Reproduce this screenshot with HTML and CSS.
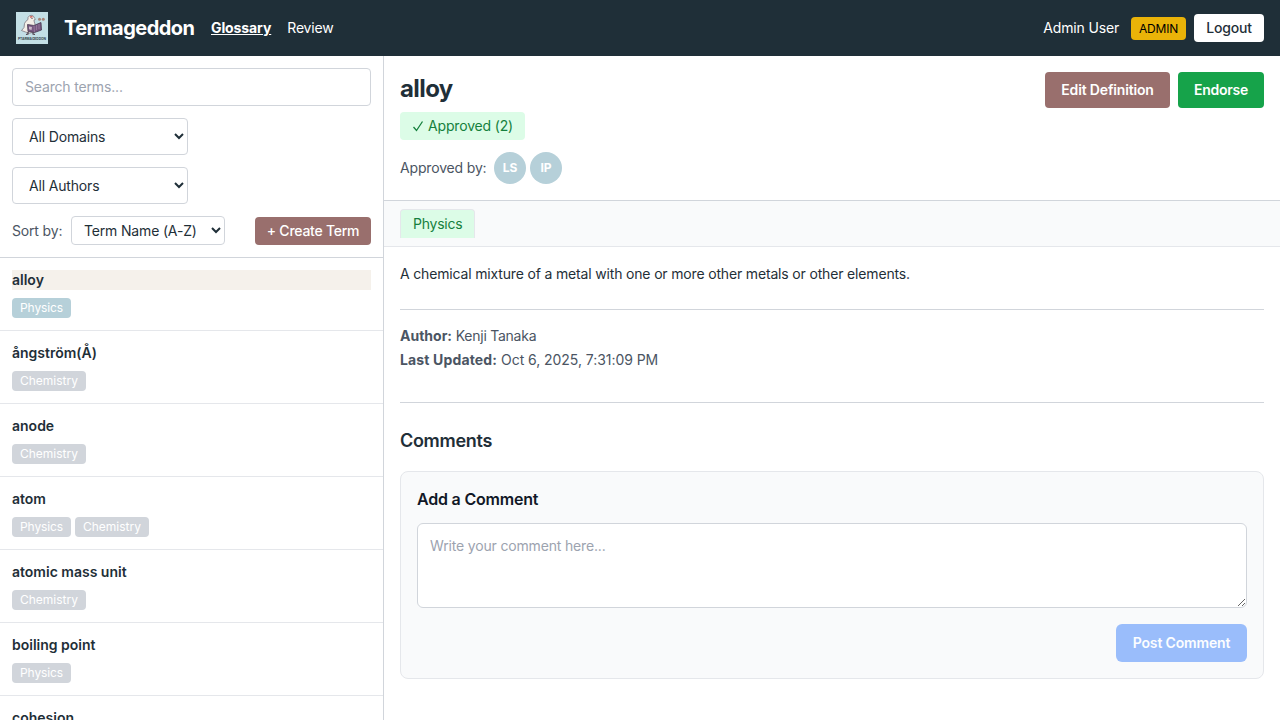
FILE: index.html
```html
<!DOCTYPE html>
<html lang="en">
<head>
<meta charset="utf-8">
<title>Termageddon</title>
<link rel="stylesheet" href="styles.css">
</head>
<body>
<header class="topbar">
  <svg class="logo" viewBox="0 0 32 32" aria-label="Termageddon logo">
    <rect width="32" height="32" fill="#c3dfe5"/>
    <path d="M12 5.500Q13 3 16 3.300Q18 4 18.300 6L19.500 7.200L18 8Q18 10 19 12L18 20Q13 22.500 9.500 20L5.500 18.500Q9 16 8.500 11.500Q9.500 9 12 7.500Z" fill="#f3eee7" stroke="#716872" stroke-width=".7"/>
    <path d="M14 5.200L16.500 4.600" stroke="#c64f49" stroke-width="1.300"/>
    <circle cx="16" cy="6.300" r=".6" fill="#392f3c"/>
    <path d="M11.500 12.500L18 13.500L25 10.500L25.500 18L18.500 20.500L12 19.500Z" fill="#76577f" stroke="#45384f" stroke-width=".8"/>
    <path d="M18 13.500L18.500 20M20.500 13V18M23 12V17" stroke="#a184a5" stroke-width=".7"/>
    <path d="M13 14.500L16 15L15.500 18L13 17.300Z" fill="#c9b7c8"/>
    <path d="M12 20V22L10 22.500M17 20.500V22L19 22.500" fill="none" stroke="#4b3b46" stroke-width="1.200"/>
    <circle cx="23.500" cy="7.300" r="1.500" fill="#a98476"/><circle cx="27.300" cy="7.300" r="1.500" fill="#a98476"/>
    <text class="logo-text" x="2" y="27.800" textLength="28" lengthAdjust="spacingAndGlyphs">PTARMAGEDDON</text>
  </svg>
  <h1 class="brand">Termageddon</h1>
  <nav class="nav"><a class="nav-link active">Glossary</a><a class="nav-link">Review</a></nav>
  <div class="account"><span class="user">Admin User</span><span class="role">ADMIN</span><button class="logout">Logout</button></div>
</header>
<div class="layout">
  <aside class="sidebar">
    <div class="filters">
      <input class="search" placeholder="Search terms...">
      <select class="filter"><option>All Domains</option></select>
      <select class="filter"><option>All Authors</option></select>
      <div class="sort-row"><label class="sort-label">Sort by:</label><select class="sort"><option>Term Name (A-Z)</option></select><button class="create">+ Create Term</button></div>
    </div>
    <div class="terms">
      <div class="term"><div class="term-name selected">alloy</div><div class="tags"><span class="tag physics tag-on">Physics</span></div></div>
      <div class="term"><div class="term-name">ångström(Å)</div><div class="tags"><span class="tag">Chemistry</span></div></div>
      <div class="term"><div class="term-name">anode</div><div class="tags"><span class="tag">Chemistry</span></div></div>
      <div class="term"><div class="term-name">atom</div><div class="tags"><span class="tag physics">Physics</span><span class="tag">Chemistry</span></div></div>
      <div class="term"><div class="term-name">atomic mass unit</div><div class="tags"><span class="tag">Chemistry</span></div></div>
      <div class="term"><div class="term-name">boiling point</div><div class="tags"><span class="tag physics">Physics</span></div></div>
      <div class="term"><div class="term-name">cohesion</div></div>
    </div>
  </aside>
  <main class="detail">
    <section class="detail-head">
      <div class="head-info">
        <h2 class="title">alloy</h2>
        <span class="approved"><svg class="check" viewBox="0 0 12 14"><path d="M1.500 8L4.500 11.500L10.500 2.500" fill="none" stroke="currentColor" stroke-width="1.300"/></svg>Approved (2)</span>
        <div class="approvers"><span class="approvers-label">Approved by:</span><span class="avatar">LS</span><span class="avatar">IP</span></div>
      </div>
      <div class="actions"><button class="action edit">Edit Definition</button><button class="action endorse">Endorse</button></div>
    </section>
    <div class="tabs"><span class="tab">Physics</span></div>
    <div class="content">
      <p class="definition">A chemical mixture of a metal with one or more other metals or other elements.</p>
      <div class="meta"><div class="author"><b>Author:</b> Kenji Tanaka</div><div class="updated"><b>Last Updated:</b> Oct 6, 2025, 7:31:09 PM</div></div>
      <section class="comments">
        <h3 class="comments-title">Comments</h3>
        <div class="card"><h4 class="card-title">Add a Comment</h4><textarea class="comment-box" placeholder="Write your comment here..."></textarea><button class="post">Post Comment</button></div>
      </section>
    </div>
  </main>
</div>
</body>
</html>
```
FILE: styles.css
```css
* { box-sizing: border-box; margin: 0; }
body { height: 720px; overflow: hidden; background: #fff; color: #1f2f38; font: 14px/20px Inter, sans-serif; letter-spacing: -.165px; -webkit-font-smoothing: antialiased; }
button, input, select, textarea { font: inherit; color: inherit; letter-spacing: inherit; }
button { border: 0; border-radius: 4px; }
.topbar { height: 56px; padding: 0 16px; display: flex; align-items: center; background: #1f2f38; color: #fff; }
.logo { width: 32px; height: 32px; margin-right: 16px; }
.logo-text { font: bold 4px Inter, sans-serif; fill: #34444c; letter-spacing: 0; }
.brand { font-size: 20px; line-height: 28px; font-weight: 700; width: 147px; letter-spacing: -.54px; }
.nav { display: flex; gap: 16px; }
.nav-link.active { font-weight: 700; text-decoration: underline; letter-spacing: -.1px; }
.account { margin-left: auto; display: flex; align-items: center; }
.role { width: 55px; text-align: center; margin: 0 8px 0 12px; padding: 4px 0; border-radius: 4px; background: #eab308; color: #000; font-size: 12px; line-height: 15px; }
.logout { width: 70px; height: 28px; padding: 0; background: #fff; color: #1f2f38; font-weight: 500; }
.layout { display: flex; height: 664px; }
.sidebar { width: 384px; border-right: 1px solid #d1d5db; overflow: hidden; flex: none; }
.filters { padding: 12px; height: 202px; border-bottom: 1px solid #d1d5db; display: flex; flex-direction: column; align-items: flex-start; gap: 12px; }
.search { width: 100%; height: 38px; padding: 0 12px 2px; border: 1px solid #d1d5db; border-radius: 4px; }
::placeholder { color: #9ca3af; opacity: 1; }
.filter { width: 176px; height: 37px; padding: 8px 12px; border: 1px solid #d1d5db; border-radius: 4px; background: #fff; }
.sort-row { width: 100%; display: flex; align-items: center; }
.sort-label { color: #4b5563; width: 59px; white-space: nowrap; }
.sort { width: 154px; height: 29px; padding: 4px 8px; border: 1px solid #d1d5db; border-radius: 4px; background: #fff; }
.create { margin-left: auto; width: 116px; height: 28px; padding: 0; background: #996f6d; color: #fff; font-weight: 500; white-space: nowrap; letter-spacing: -.25px; }
.term { padding: 12px; border-bottom: 1px solid #e5e7eb; }
.term-name { font-weight: 600; letter-spacing: 0; }
.selected { background: #f5f1eb; }
.tags { display: flex; gap: 4px; margin-top: 8px; letter-spacing: 0; }
.tag { width: 74px; text-align: center; padding: 2px 0; border-radius: 4px; background: #d1d5db; color: #fff; font-size: 12px; line-height: 16px; }
.physics { width: 59px; letter-spacing: -.12px; }
.tag-on { background: #b6d0d9; }
.detail { flex: 1; }
.detail-head { height: 145px; padding: 16px; border-bottom: 1px solid #d1d5db; display: flex; justify-content: space-between; align-items: flex-start; }
.title { font-size: 24px; line-height: 34px; font-weight: 700; margin-bottom: 6px; letter-spacing: -.6px; }
.approved { display: flex; width: 125px; padding: 4px 12px; border-radius: 4px; background: #dcfce7; color: #15803d; white-space: nowrap; }
.check { width: 12px; height: 14px; margin: 3px 4px 0 0; flex: none; }
.approvers { display: flex; align-items: center; gap: 4px; margin-top: 12px; color: #4b5563; }
.approvers-label { width: 90px; white-space: nowrap; }
.avatar { width: 32px; height: 32px; border-radius: 50%; background: #b6d0d9; color: #fff; font-size: 12px; line-height: 32px; font-weight: 700; text-align: center; }
.actions { display: flex; gap: 8px; }
.action { height: 36px; padding: 0; color: #fff; font-weight: 600; }
.edit { width: 125px; background: #996f6d; }
.endorse { width: 86px; background: #16a34a; letter-spacing: -.25px; }
.tabs { height: 46px; padding: 8px 16px; background: #f9fafb; border-bottom: 1px solid #e5e7eb; display: flex; }
.tab { width: 75px; padding: 4px 12px; height: 29px; border: 1px solid #e5e7eb; border-bottom: 0; border-radius: 4px 4px 0 0; background: #dcfce7; color: #15803d; letter-spacing: -.25px; }
.content { padding: 16px; }
.definition { line-height: 22px; margin-bottom: 24px; }
.meta { height: 93px; padding-top: 16px; line-height: 20px; display: flex; flex-direction: column; gap: 4px; border-top: 1px solid #d1d5db; color: #4b5563; }
.meta b { letter-spacing: 0; }
.author { letter-spacing: -.25px; }
.updated { letter-spacing: -.05px; }
.updated b { letter-spacing: .15px; }
.comments { border-top: 1px solid #d1d5db; padding-top: 24px; }
.comments-title { font-size: 18px; line-height: 28px; font-weight: 600; margin-bottom: 16px; letter-spacing: -.3px; }
.card { height: 208px; padding: 16px; border: 1px solid #e5e7eb; border-radius: 8px; background: #f9fafb; display: flex; flex-direction: column; }
.card-title { color: #111827; font-size: 16px; line-height: 22px; font-weight: 600; margin-bottom: 13px; letter-spacing: -.2px; }
.comment-box { width: 100%; height: 85px; padding: 12px; border: 1px solid #d1d5db; border-radius: 6px; background: #fff; resize: vertical; }
.post { align-self: flex-end; margin-top: 16px; width: 131px; height: 38px; padding: 0; border-radius: 6px; background: #9abdfb; color: #fcfdff; font-weight: 600; }
```
